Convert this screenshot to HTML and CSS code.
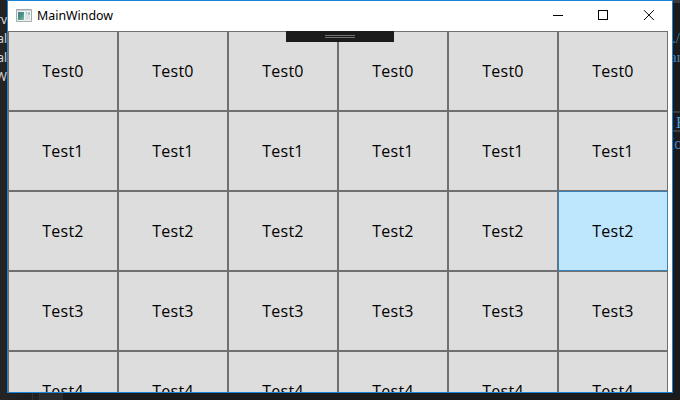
FILE: index.html
```html
<!DOCTYPE html>
<html lang="en">
<head>
<meta charset="utf-8">
<title>MainWindow</title>
<link rel="stylesheet" href="styles.css">
</head>
<body>
<div class="desktop">
  <div class="editor-text left"><span>rv</span><span>al</span><span>al</span><span>W</span></div>
  <div class="editor-text right"><span class="slash">./</span><span class="an">an</span><span class="hint">H</span><span class="mo">Mo</span></div>
  <div class="editor-foot"></div>
  <main class="window">
    <header class="titlebar">
      <svg class="app-icon" width="16" height="13" viewBox="0 0 16 13">
        <defs><linearGradient id="g" x1="0" y1="0" x2="1" y2="1"><stop stop-color="#4776a6"/><stop offset=".5" stop-color="#46957f"/><stop offset="1" stop-color="#8bbd9d"/></linearGradient></defs>
        <path fill="#f3f3f3" stroke="#a6abb0" d="M.5.5h15v12H.5z"/>
        <path fill="#c7ccd1" d="M1 1h14v1H1z"/>
        <path fill="url(#g)" d="M2 3h6v8H2z"/>
        <path fill="#dce3e8" d="M9 3h5v8H9z"/>
        <path fill="#9ccbc1" d="M10 3h1v2h-1zM12 3h2v3h-2z"/>
      </svg>
      <h1 class="title">MainWindow</h1>
      <svg class="controls" width="102" height="12" viewBox="0 0 102 12" fill="none" stroke="#000" shape-rendering="crispEdges">
        <path d="M0 5.5h10M45.5.5h9v9h-9z"/>
        <path shape-rendering="auto" d="M91 .2l9.8 9.8M100.8.2L91 10"/>
      </svg>
    </header>
    <section class="grid">
      <button>Test0</button><button>Test0</button><button>Test0</button><button>Test0</button><button>Test0</button><button>Test0</button>
      <button>Test1</button><button>Test1</button><button>Test1</button><button>Test1</button><button>Test1</button><button>Test1</button>
      <button>Test2</button><button>Test2</button><button>Test2</button><button>Test2</button><button>Test2</button><button class="active">Test2</button>
      <button>Test3</button><button>Test3</button><button>Test3</button><button>Test3</button><button>Test3</button><button>Test3</button>
      <button>Test4</button><button>Test4</button><button>Test4</button><button>Test4</button><button>Test4</button><button>Test4</button>
    </section>
    <div class="debug-tab"><i></i></div>
  </main>
</div>
</body>
</html>
```
FILE: styles.css
```css
* { box-sizing: border-box; }
body { margin: 0; }
.desktop {
  position: relative;
  width: 680px;
  height: 400px;
  overflow: hidden;
  background: linear-gradient(90deg, #242424, #1b1b1b 60px);
}
.window {
  position: absolute;
  left: 7px;
  top: 0;
  width: 666px;
  height: 393px;
  overflow: hidden;
  border: 1px solid #1883d7;
  background: #fff;
}
.titlebar {
  display: flex;
  align-items: center;
  height: 30px;
  padding: 0 17px 1px 8px;
}
.title {
  flex: 1;
  margin: 1px 0 0 5px;
  color: #000;
  font: 400 12.4px/18px "Noto Sans", "Open Sans", sans-serif;
}
.controls { margin-top: 1px; }
.grid {
  display: grid;
  grid-template-columns: repeat(6, 110px);
  grid-auto-rows: 80px;
}
button {
  padding: 0;
  border: 1px solid #707070;
  border-radius: 0;
  background: #ddd;
  color: #000;
  font: 400 16px/22px "Open Sans", "Noto Sans", sans-serif;
  letter-spacing: .25px;
}
.active { border-color: #3c7fb1; background: #bee6fd; }
.debug-tab {
  position: absolute;
  left: 278px;
  top: 30px;
  width: 108px;
  height: 11px;
  padding: 4px 39px;
  background: #1b1b1b;
}
.debug-tab i {
  display: block;
  height: 3px;
  border: solid #707070;
  border-width: 1px 0;
}
.editor-text {
  position: absolute;
  top: 0;
  display: flex;
  flex-direction: column;
}
.left {
  left: 0;
  width: 7px;
  padding-top: 10px;
  align-items: flex-end;
  overflow: hidden;
  color: #d8d8d8;
  font: 12px/19px "Noto Sans", sans-serif;
}
.right {
  left: 673px;
  width: 7px;
  padding-top: 26px;
  border-top: 3px solid #38383b;
  overflow: hidden;
  color: #4c82b6;
  font: 15px/19px "Liberation Serif", serif;
}
.slash { margin-left: -1px; }
.an { margin-left: -3px; }
.hint {
  height: 21px;
  margin: 44px 0 2px;
  padding-left: 3px;
  border: solid #3c3c3c;
  border-width: 2px 0;
  color: #569cd6;
  font-size: 16px;
}
.mo { margin-left: -13px; font-size: 16px; }
.editor-foot {
  position: absolute;
  left: 32px;
  bottom: 0;
  width: 31px;
  height: 7px;
  border-left: 1px solid #30303a;
  background: linear-gradient(90deg, #202020 6px, #30303a 6px 7px, #2b2b2b 7px);
}
```
